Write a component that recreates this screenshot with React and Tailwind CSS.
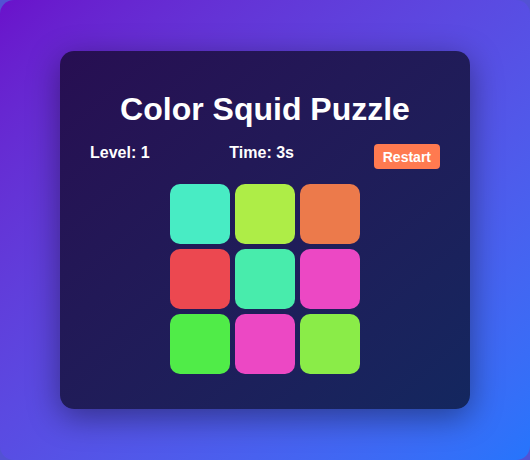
import React from "react";

const TILES = [
  "#48ecc4",
  "#aeed47",
  "#ec7a4b",
  "#ec4850",
  "#48ecac",
  "#ec48c4",
  "#50ec48",
  "#ec48c4",
  "#8aec48",
];

export default function App() {
  return (
    <div className="w-[530px] h-[460px] bg-[#5352d3]">
      <div
        className="w-full h-full rounded-[14px] bg-gradient-to-br from-[#6a11cb] to-[#2575fc] flex items-center justify-center"
        style={{ fontFamily: '"Liberation Sans", Arial, sans-serif' }}
      >
        <div className="w-[410px] rounded-[14px] bg-gradient-to-br from-[#270e52] to-[#13275f] pt-[40px] px-[30px] pb-[35px] shadow-[0_8px_32px_rgba(0,0,0,0.4)]">
          <h1 className="text-[32px] leading-[36px] font-bold text-white text-center mb-[17px]">
            Color Squid Puzzle
          </h1>

          <div className="flex justify-between items-start mb-[15px]">
            <span className="text-white font-bold text-[16px] leading-[18px]">Level: 1</span>
            <span className="text-white font-bold text-[16px] leading-[18px]">Time: 3s</span>
            <button className="bg-[#ff7a50] text-white font-bold text-[14px] leading-[16px] px-[9px] py-[4.5px] rounded-[4px]">
              Restart
            </button>
          </div>

          <div className="grid grid-cols-[60px_60px_60px] gap-[5px] justify-center">
            {TILES.map((c, i) => (
              <div
                key={i}
                className="w-[60px] h-[60px] rounded-[10px]"
                style={{ backgroundColor: c }}
              />
            ))}
          </div>
        </div>
      </div>
    </div>
  );
}
